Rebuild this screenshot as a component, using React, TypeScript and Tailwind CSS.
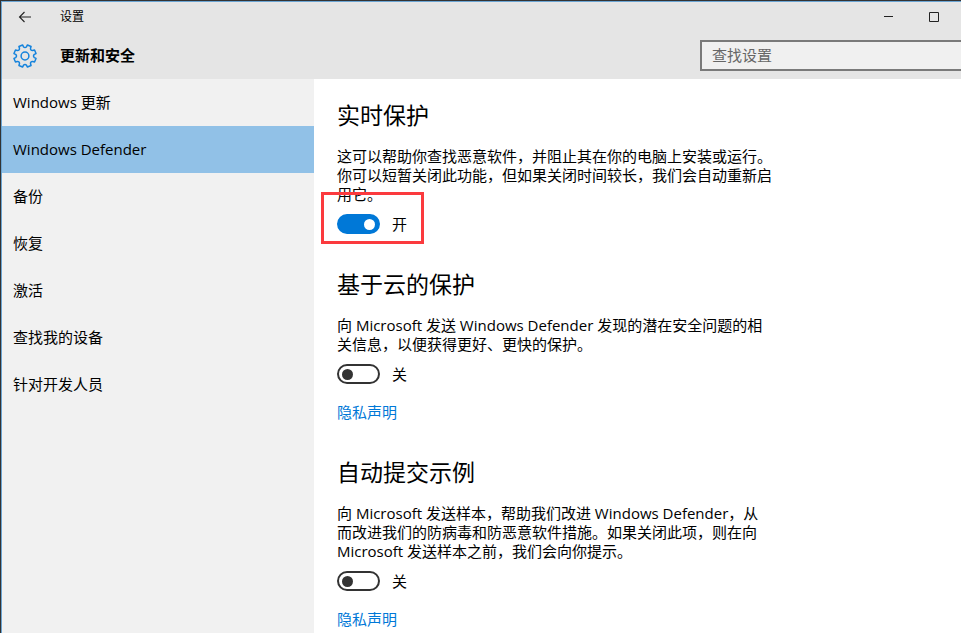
import React, { useState } from "react"

const navItems = [
  "Windows 更新",
  "Windows Defender",
  "备份",
  "恢复",
  "激活",
  "查找我的设备",
  "针对开发人员",
]

const sections = [
  {
    id: "realtime",
    title: "实时保护",
    lines: [
      "这可以帮助你查找恶意软件，并阻止其在你的电脑上安装或运行。",
      "你可以短暂关闭此功能，但如果关闭时间较长，我们会自动重新启",
      "用它。",
    ],
    enabled: true,
    marked: true,
    privacy: false,
  },
  {
    id: "cloud",
    title: "基于云的保护",
    lines: [
      "向 Microsoft 发送 Windows Defender 发现的潜在安全问题的相",
      "关信息，以便获得更好、更快的保护。",
    ],
    enabled: false,
    marked: false,
    privacy: true,
  },
  {
    id: "samples",
    title: "自动提交示例",
    lines: [
      "向 Microsoft 发送样本，帮助我们改进 Windows Defender，从",
      "而改进我们的防病毒和防恶意软件措施。如果关闭此项，则在向",
      "Microsoft 发送样本之前，我们会向你提示。",
    ],
    enabled: false,
    marked: false,
    privacy: true,
  },
]

const polar = (radius: number, degrees: number) => {
  const angle = (degrees * Math.PI) / 180
  const x = 12 + radius * Math.sin(angle)
  const y = 12 - radius * Math.cos(angle)
  return `${x.toFixed(2)} ${y.toFixed(2)}`
}

// eight teeth with rounded valleys, a valley sits at twelve o'clock
const gearPath =
  [0, 1, 2, 3, 4, 5, 6, 7]
    .map((i) => {
      const c = 22.5 + i * 45
      return `${i === 0 ? "M" : "L"}${polar(11.3, c - 10)} L${polar(11.3, c + 10)} L${polar(9.5, c + 13)} Q${polar(7.6, c + 22.5)} ${polar(9.5, c + 32)}`
    })
    .join(" ") + "Z"

const GearIcon = () => (
  <svg
    viewBox="0 0 24 24"
    className="size-6"
    fill="none"
    stroke="#1583dc"
    strokeWidth="1.5"
    strokeLinejoin="round"
    aria-hidden="true"
  >
    <path d={gearPath} />
    <circle cx="12" cy="12" r="3.9" />
  </svg>
)

const Toggle = ({ id, initial }: { id: string; initial: boolean }) => {
  const [on, setOn] = useState(initial)
  return (
    <label htmlFor={id} className="flex items-center gap-3 h-5 w-fit">
      <input
        id={id}
        type="checkbox"
        role="switch"
        checked={on}
        onChange={(e) => setOn(e.target.checked)}
        className={`flex items-center appearance-none w-[43px] h-5 px-[3px] rounded-full border-2 before:size-[11px] before:rounded-full ${
          on
            ? "justify-end bg-[#0078d7] border-[#0078d7] before:bg-white"
            : "justify-start bg-white border-[#333333] before:bg-[#333333]"
        }`}
      />
      <span>{on ? "开" : "关"}</span>
    </label>
  )
}

const TitleBar = () => (
  <div className="flex items-center justify-between h-[29px] text-xs">
    <div className="flex items-center">
      <button aria-label="返回" className="w-[58px] pl-4">
        <svg
          viewBox="0 0 14 12"
          className="w-3.5 h-3"
          fill="none"
          stroke="#222222"
          strokeWidth="1.1"
        >
          <path d="M13 6H1.500M6.500 1l-5 5 5 5" />
        </svg>
      </button>
      <span>设置</span>
    </div>
    <div className="flex items-center gap-[34px] pr-[22px]">
      <button aria-label="最小化">
        <svg viewBox="0 0 11 11" className="size-[11px]" stroke="#222222">
          <path d="M1 5.500h9" />
        </svg>
      </button>
      <button aria-label="最大化">
        <svg
          viewBox="0 0 11 11"
          className="size-[11px]"
          fill="none"
          stroke="#222222"
        >
          <path d="M1.500 1.500h9v9h-9z" />
        </svg>
      </button>
    </div>
  </div>
)

const App = () => {
  const [active, setActive] = useState("Windows Defender")

  return (
    <div className="min-h-screen flex border-t border-l border-[#333333] bg-white font-['Open_Sans','Noto_Sans_CJK_SC',sans-serif] text-[15px] leading-[19px] text-black">
      <div className="flex-1 flex flex-col border-t border-l border-[#6ba5d3]">
        <header className="bg-[#e5e5e5] pb-2">
          <TitleBar />
          <div className="flex items-center justify-between pt-[9px]">
            <div className="flex items-center gap-[23px] pl-[11px]">
              <GearIcon />
              <h1 className="font-bold">更新和安全</h1>
            </div>
            <input
              type="search"
              aria-label="查找设置"
              placeholder="查找设置"
              className="w-[261px] h-[31px] px-2.5 pb-0.5 border-2 border-r-0 border-[#7a7a7a] bg-[#f0f0f0] placeholder:text-[#666666] outline-none"
            />
          </div>
        </header>
        <div className="flex-1 flex">
          <nav className="w-78 shrink-0 bg-[#f1f1f1]">
            {navItems.map((item) => (
              <button
                key={item}
                onClick={() => setActive(item)}
                className={`block w-full h-[47px] pl-[11px] text-left ${
                  active === item ? "bg-[#91c1e7]" : ""
                }`}
              >
                {item}
              </button>
            ))}
          </nav>
          <main className="flex-1 flex flex-col gap-[34px] pt-5 pl-[23px]">
            {sections.map((section) => (
              <section key={section.id}>
                <h2 className="text-[23px] leading-8 mb-4">
                  {section.title}
                </h2>
                <p className="mb-2.5 whitespace-nowrap">
                  {section.lines.map((line) => (
                    <span key={line} className="block">
                      {line}
                    </span>
                  ))}
                </p>
                <div className="relative">
                  <Toggle id={section.id} initial={section.enabled} />
                  {section.marked && (
                    <div className="absolute -left-4 -top-[22px] w-[103px] h-[52px] border-3 border-[#fb3a3e] pointer-events-none" />
                  )}
                </div>
                {section.privacy && (
                  <a
                    href="#privacy"
                    className="block w-fit mt-[18px] leading-5 text-[#0078d7]"
                  >
                    隐私声明
                  </a>
                )}
              </section>
            ))}
          </main>
        </div>
      </div>
    </div>
  )
}

export default App
